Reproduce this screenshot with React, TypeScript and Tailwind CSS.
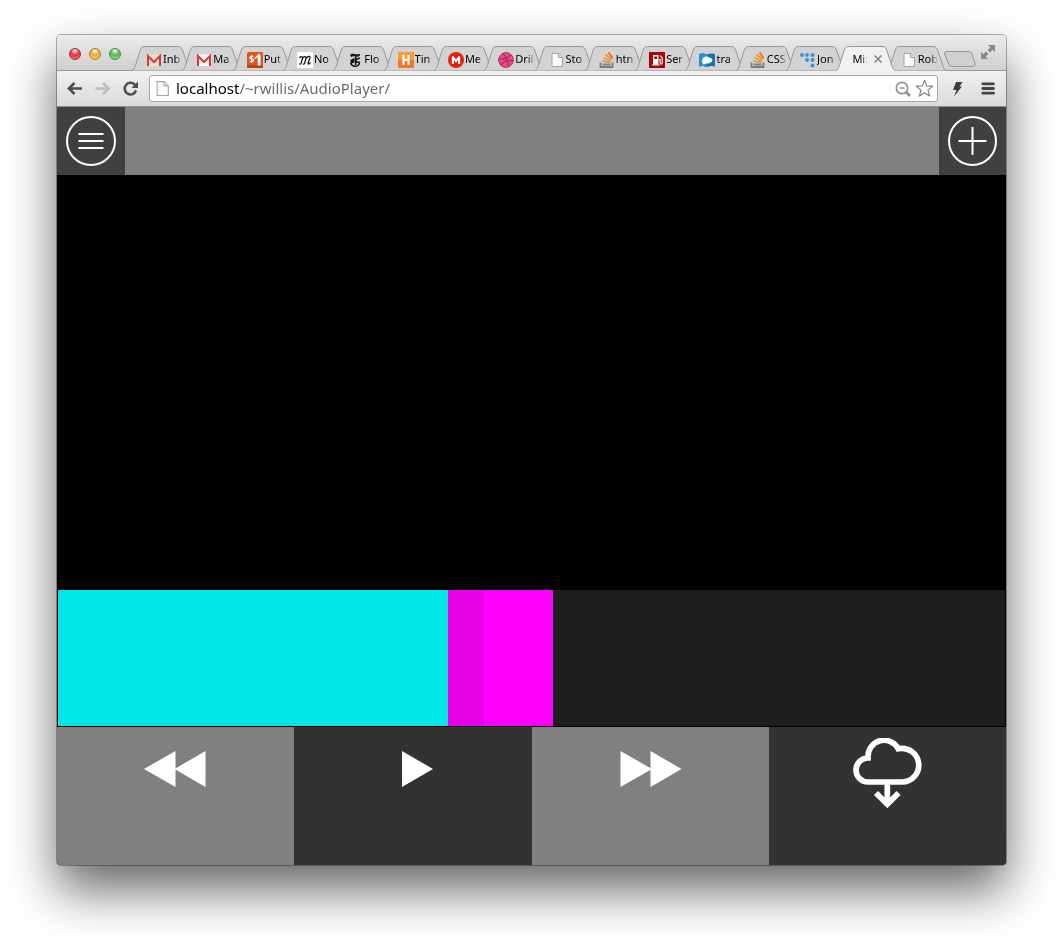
import { useState } from "react";
import type { ReactNode } from "react";

const ICON = "h-4 w-4 shrink-0";

function Gmail({ tint }: { tint: string }) {
  return (
    <svg viewBox="0 0 16 16" className={ICON} aria-hidden="true">
      <rect x="1" y="2.5" width="14" height="11.5" rx="1" fill={tint} />
      <path d="M2 13.5 6.5 8.5M14 13.5 9.5 8.5" stroke="#cfc8bf" strokeWidth="0.8" />
      <path d="M2 14V4l6 6 6-6v10" fill="none" stroke="#d93a34" strokeWidth="2" />
    </svg>
  );
}

function PageIcon({ className = ICON }: { className?: string }) {
  return (
    <svg viewBox="0 0 16 16" className={className} aria-hidden="true">
      <path d="M3 1.500h6.500L13.500 5.500v9H3z" fill="#fafafa" stroke="#a4a4a4" />
      <path d="M9.500 1.500v4h4" fill="#e4e4e4" stroke="#a4a4a4" />
    </svg>
  );
}

function Dollar() {
  return (
    <svg viewBox="0 0 16 16" className={ICON} aria-hidden="true">
      <rect width="16" height="16" rx="1.500" fill="#d9581c" />
      <rect y="13" width="16" height="3" rx="1" fill="#b8440f" />
      <path d="M6.500 4.500H3.500L2.700 6l1 1h2.200l.8 1-.8 1.500H2.500M4.700 3v8" fill="none" stroke="#fff" strokeWidth="1.100" />
      <path d="M8 6.500 11.500 3v10.500M12.800 2.500v11" fill="none" stroke="#fff" strokeWidth="1.500" />
    </svg>
  );
}

function Script() {
  return (
    <svg viewBox="0 0 16 16" className={ICON} aria-hidden="true">
      <rect width="16" height="16" fill="#fff" />
      <path d="M2.500 6C3 4 6 4 5.500 6.500L4 11.500c-.5 1-1.500.5-1.500 0M5.500 6.500C7 4 9.500 4 9 6.500L7.500 11.500c-.5 1-1.500.5-1.500 0M9 6.500C10.500 4 13.500 3.500 13 5.500L11 11.500c.5 1 1.500.5 2.500-1" fill="none" stroke="#111" strokeWidth="1.200" />
    </svg>
  );
}

function Gothic() {
  return (
    <svg viewBox="0 0 16 16" className={ICON} aria-hidden="true">
      <path d="M4 2.200c2.500-1.200 5 1.300 9-.4.300 1.800-1 3-2.700 3C8 4.800 6 3.200 4.500 5 3.200 4.600 2.800 3 4 2.200z" fill="#111" />
      <path d="M8.700 4.500v8.500" stroke="#111" strokeWidth="1.600" />
      <path d="M3.500 7.800 7.500 6v4.500L3.500 12z" fill="#111" />
      <path d="M9 7.500 12.800 6M3.500 11c1 2.300 2.500 3.300 4.700 3.300 2.300 0 4-1.300 4.300-3.800L9 9.500" fill="none" stroke="#111" strokeWidth="1.500" />
    </svg>
  );
}

function LetterH() {
  return (
    <svg viewBox="0 0 16 16" className={ICON} aria-hidden="true">
      <rect width="16" height="16" rx="1" fill="#f4762a" />
      <rect width="16" height="8" rx="1" fill="#f99a3c" />
      <path d="M5.500 3v10M10.500 3v10M5.500 8h5" stroke="#fff" strokeWidth="2.100" />
    </svg>
  );
}

function LetterM() {
  return (
    <svg viewBox="0 0 16 16" className={ICON} aria-hidden="true">
      <circle cx="8" cy="8" r="8" fill="#e3210b" />
      <path d="M3.800 12V4.200h1.900L8 7.500l2.300-3.300h1.900V12h-2.100V8L8 10.800 5.900 8v4z" fill="#fff" />
    </svg>
  );
}

function Ball() {
  return (
    <svg viewBox="0 0 16 16" className={ICON} aria-hidden="true">
      <circle cx="8" cy="8" r="7.400" fill="#ea4c89" stroke="#b52d66" />
      <path d="M5 1.500c3 3.500 5 8 5.800 13M1 7c5 .3 9.500-1 12-4.500M3 13.500C5 9.500 9.500 7.500 15 8.800" fill="none" stroke="#a82a60" strokeWidth="1.200" />
    </svg>
  );
}

function Stack() {
  return (
    <svg viewBox="0 0 16 16" className={ICON} aria-hidden="true">
      <path d="M1.500 10.500V15h12v-4.500" fill="none" stroke="#7b7b7b" strokeWidth="1.800" />
      <path d="M3.500 12.500h8" stroke="#8a8069" strokeWidth="1.800" />
      <path d="m3.500 9 8.200 1.500" stroke="#c59a4f" strokeWidth="1.700" />
      <path d="m4.500 5.500 7.500 3.700" stroke="#ec9a24" strokeWidth="1.700" />
      <path d="m6.500 2.500 6.200 5" stroke="#f5901d" strokeWidth="1.700" />
      <path d="m9.500.3 4.200 6" stroke="#f0662c" strokeWidth="1.700" />
    </svg>
  );
}

function Fuel() {
  return (
    <svg viewBox="0 0 16 16" className={ICON} aria-hidden="true">
      <rect width="16" height="16" fill="#ab0505" />
      <path d="M4 3h5.500v10H4z" fill="#fff" />
      <path d="M5.200 4.500h3v2.500h-3z" fill="#ab0505" />
      <path d="M3 13h7.500M10 7.500h1.200V11c0 1.500 2 1.500 2 0V6l-2-2.500" fill="none" stroke="#fff" strokeWidth="1.100" />
    </svg>
  );
}

function BlueBook() {
  return (
    <svg viewBox="0 0 16 16" className={ICON} aria-hidden="true">
      <path d="M0 2c3-1 5-.5 8 .5 3-1 5-1.500 8-.5v12.500c-3-1-5-.5-8 .5-3-1-5-1.500-8-.5z" fill="#1273b5" />
      <path d="M0 2c3-1 5-.5 8 .5V15c-3-1-5-1.500-8-.5z" fill="#2493d3" />
      <path d="M4.500 12.500c-2-2-2-6.500 1-7.500 2-1 4 0 5.500 1 2 0 3 2 2 3.500s-2.500.8-3 2H7z" fill="#fff" />
    </svg>
  );
}

const DOTS = [
  [2, 3],
  [7, 3],
  [12.5, 3],
  [7, 8],
  [12.5, 8],
  [12.5, 13.5],
];

function Dots() {
  return (
    <svg viewBox="0 0 16 16" className={ICON} aria-hidden="true">
      {DOTS.map(([x, y], i) => (
        <circle key={i} cx={x} cy={y} r="2" fill="#3f92d2" />
      ))}
    </svg>
  );
}

type TabData = { label: string; icon?: ReactNode };

const tabs: TabData[] = [
  { label: "Inb", icon: <Gmail tint="#e9e2d6" /> },
  { label: "Ma", icon: <Gmail tint="#ffffff" /> },
  { label: "Put", icon: <Dollar /> },
  { label: "No", icon: <Script /> },
  { label: "Flo", icon: <Gothic /> },
  { label: "Tin", icon: <LetterH /> },
  { label: "Me", icon: <LetterM /> },
  { label: "Dril", icon: <Ball /> },
  { label: "Sto", icon: <PageIcon /> },
  { label: "htn", icon: <Stack /> },
  { label: "Ser", icon: <Fuel /> },
  { label: "tra", icon: <BlueBook /> },
  { label: "CSS", icon: <Stack /> },
  { label: "Jon", icon: <Dots /> },
  { label: "Mi:" },
  { label: "Rob", icon: <PageIcon /> },
];

function Tab({ tab, active, onSelect }: { tab: TabData; active: boolean; onSelect: () => void }) {
  return (
    <div className={`relative h-[25px] min-w-0 flex-1 ${active ? "z-10" : ""}`}>
      <svg
        viewBox="0 0 60 25"
        preserveAspectRatio="none"
        className="absolute inset-y-0 left-0 h-full w-[calc(100%+9px)]"
        aria-hidden="true"
      >
        <path
          d="M0 24.500C2 24 2.500 22 3.500 19.500L8 5C9 2 10 .5 13 .5H46.500C49.500 .5 50.500 2 51.500 5L56.500 19.500C57.500 22 58 24 60 24.500"
          fill={active ? "#f1f1f1" : "#d3d3d3"}
          stroke="#979797"
        />
        {active && <path d="M1 25h58" stroke="#f1f1f1" strokeWidth="2" />}
      </svg>
      <button
        type="button"
        role="tab"
        aria-selected={active}
        onClick={onSelect}
        className={`relative flex h-full w-full items-center gap-px pt-0.5 ${tab.icon ? "pl-3.5" : "pl-4"}`}
      >
        {tab.icon}
        <span
          className={`text-left text-[11px] whitespace-nowrap text-black mask-r-from-60% ${
            tab.icon ? "min-w-5" : "min-w-4"
          }`}
        >
          {tab.label}
        </span>
      </button>
      {active && (
        <button type="button" aria-label="Close tab" className="absolute top-2 right-1 h-2.5 w-2.5">
          <svg viewBox="0 0 10 10" aria-hidden="true">
            <path d="m1.500 1.500 7 7m0-7-7 7" stroke="#858585" strokeWidth="1.700" />
          </svg>
        </button>
      )}
    </div>
  );
}

function TabStrip() {
  const [current, setCurrent] = useState(14);
  return (
    <div className="flex h-9 items-end border-b border-[#979797] bg-linear-to-b from-[#ececec] to-[#cfcfcf]">
      <div className="flex w-[75px] shrink-0 gap-2 self-center pt-0.5 pl-3">
        <button type="button" aria-label="Close window" className="h-3 w-3 rounded-full border border-[#a13333] bg-[radial-gradient(circle_at_50%_20%,#ffd8d8_5%,#e4303a_45%,#ff7b7b)]" />
        <button type="button" aria-label="Minimise window" className="h-3 w-3 rounded-full border border-[#a8772a] bg-[radial-gradient(circle_at_50%_20%,#fff3d5_5%,#eda62b_45%,#ffe06b)]" />
        <button type="button" aria-label="Zoom window" className="h-3 w-3 rounded-full border border-[#4c8a45] bg-[radial-gradient(circle_at_50%_20%,#e8ffe3_5%,#55b64d_45%,#a8ec8d)]" />
      </div>
      <div role="tablist" className="-mb-px flex min-w-0 flex-1">
        {tabs.map((tab, i) => (
          <Tab key={i} tab={tab} active={i === current} onSelect={() => setCurrent(i)} />
        ))}
      </div>
      <button type="button" aria-label="New tab" className="mb-[3px] ml-1.5 h-4 w-[33px] shrink-0">
        <svg viewBox="0 0 33 16" className="h-4 w-full" aria-hidden="true">
          <path d="M4 .5h22q2 0 3 2l3 10q1 3-2 3H9q-2 0-3-2L1.500 3Q1 .5 4 .5z" fill="#d0d0d0" stroke="#979797" />
        </svg>
      </button>
      <button type="button" aria-label="Full screen" className="mr-2.5 mb-2.5 ml-1 h-4 w-4 shrink-0">
        <svg viewBox="0 0 16 16" className="h-4 w-4" aria-hidden="true">
          <path d="M8 1h7v7l-2.300-2.300-2.700 2.700-2.400-2.400 2.700-2.700zM1 8l2.300 2.300L6 7.600 8.400 10l-2.700 2.700L8 15H1z" fill="#8a8a8a" />
        </svg>
      </button>
    </div>
  );
}

function Toolbar() {
  const [address, setAddress] = useState("localhost/~rwillis/AudioPlayer/");
  return (
    <div className="flex h-9 items-center border-b border-[#8c8c8c] bg-linear-to-b from-[#f1f1f1] to-[#dadada] pl-2.5">
      <div className="flex w-[82px] shrink-0 gap-3">
        <button type="button" aria-label="Back" className="h-4 w-4">
          <svg viewBox="0 0 16 16" aria-hidden="true">
            <path d="M7.500 2 1.800 7.500 7.500 13M2 7.500h13" fill="none" stroke="#4d4d4d" strokeWidth="2.600" />
          </svg>
        </button>
        <button type="button" aria-label="Forward" className="h-4 w-4">
          <svg viewBox="0 0 16 16" aria-hidden="true">
            <path d="M8 2l5.700 5.500L8 13M13.500 7.500H.5" fill="none" stroke="#bcbcbc" strokeWidth="2.600" />
          </svg>
        </button>
        <button type="button" aria-label="Reload" className="h-4 w-4">
          <svg viewBox="0 0 16 16" aria-hidden="true">
            <path d="M12.200 4.200A5.800 5.800 0 1 0 13 9.500" fill="none" stroke="#4d4d4d" strokeWidth="2.500" />
            <path d="M15 .5v6.400H8.500z" fill="#4d4d4d" />
          </svg>
        </button>
      </div>
      <div className="flex h-[27px] min-w-0 flex-1 items-center rounded-[3px] border border-[#a5a5a5] bg-white pr-[3px] pl-1">
        <PageIcon className="h-[17px] w-[17px] shrink-0" />
        <input
          aria-label="Address"
          value={address}
          spellCheck={false}
          onChange={(e) => setAddress(e.target.value)}
          className="ml-[5px] min-w-0 flex-1 bg-[linear-gradient(90deg,#000_64px,#666_64px)] bg-clip-text text-[15px] text-transparent caret-black outline-none"
        />
        <button type="button" aria-label="Zoom" className="h-4 w-4 shrink-0">
          <svg viewBox="0 0 16 16" aria-hidden="true">
            <circle cx="7" cy="7" r="5.700" fill="none" stroke="#929292" strokeWidth="1.700" />
            <path d="M4.500 7h5" stroke="#929292" strokeWidth="1.500" />
            <path d="m11 11 4 4" stroke="#929292" strokeWidth="2.600" />
          </svg>
        </button>
        <button type="button" aria-label="Bookmark" className="ml-1 h-[19px] w-[19px] shrink-0">
          <svg viewBox="0 0 19 19" aria-hidden="true">
            <path d="m9.500 1.200 2.200 5.700 6 .3-4.700 3.900 1.700 6-5.200-3.400-5.200 3.400 1.700-6L1.300 7.200l6-.3z" fill="none" stroke="#858585" strokeWidth="1.200" strokeLinejoin="round" />
          </svg>
        </button>
      </div>
      <button type="button" aria-label="Extension" className="ml-3 h-4 w-4 shrink-0">
        <svg viewBox="0 0 16 16" aria-hidden="true">
          <path d="M6 1h6.500L9.500 5.500H12L4 15.500l2.500-6.500H3z" fill="#3d3d3d" />
        </svg>
      </button>
      <button type="button" aria-label="Menu" className="mr-2.5 ml-3.5 h-4 w-4 shrink-0">
        <svg viewBox="0 0 16 16" aria-hidden="true">
          <path d="M2.800 2.800h10.700M2.800 7.500h10.700M2.800 12.200h10.700" stroke="#454545" strokeWidth="2.800" strokeLinecap="round" />
        </svg>
      </button>
    </div>
  );
}

function Player() {
  return (
    <main className="flex flex-1 flex-col bg-black">
      <header className="flex h-[68px] justify-between bg-[#808080]">
        <button type="button" aria-label="Playlist" className="grid w-[68px] place-items-center bg-[#404040]">
          <svg viewBox="0 0 50 50" className="h-[50px] w-[50px]" fill="none" stroke="#fff" strokeWidth="2" aria-hidden="true">
            <circle cx="25" cy="25" r="24" />
            <path d="M12.500 18h25M12.500 25h25M12.500 32h25" />
          </svg>
        </button>
        <button type="button" aria-label="Add" className="grid w-[67px] place-items-center bg-[#404040]">
          <svg viewBox="0 0 49 50" className="h-[50px] w-[49px]" fill="none" stroke="#fff" strokeWidth="2" aria-hidden="true">
            <ellipse cx="24.500" cy="25" rx="23.500" ry="24" />
            <path d="M10.500 25h28M24.500 11v28" />
          </svg>
        </button>
      </header>
      <div className="flex-1" />
      <div className="flex h-[138px] border border-black bg-[#1e1e1e]">
        <div className="w-[41.2%] bg-[#00e6e6]" />
        <div className="w-[3.8%] bg-[#e600e6]" />
        <div className="w-[7.3%] bg-[#ff00ff]" />
      </div>
      <div className="grid h-[138px] grid-cols-4">
        <button type="button" aria-label="Rewind" className="flex justify-center bg-[#808080] pt-6">
          <svg viewBox="0 0 64 36" className="h-9 w-16" fill="#fff" aria-hidden="true">
            <path d="M0 18 31.500 0v36zM30.500 18 61.500 0v36z" />
          </svg>
        </button>
        <button type="button" aria-label="Play" className="flex justify-center bg-[#323232] pt-6">
          <svg viewBox="0 0 40 36" className="h-9 w-10" fill="#fff" aria-hidden="true">
            <path d="M9 0v36l31-18z" />
          </svg>
        </button>
        <button type="button" aria-label="Fast forward" className="flex justify-center bg-[#808080] pt-6">
          <svg viewBox="0 0 64 36" className="h-9 w-16" fill="#fff" aria-hidden="true">
            <path d="M2.500 0v36L34 18zM32.500 0v36l31-18z" />
          </svg>
        </button>
        <button type="button" aria-label="Download" className="flex justify-center bg-[#323232] pt-[11px]">
          <svg viewBox="0 0 71 71" className="h-[71px] w-[71px]" fill="none" stroke="#fff" strokeWidth="5.700" aria-hidden="true">
            <path d="M50 44H16a12 12 0 0 1 0-24V19A16.100 16.100 0 0 1 46.300 10.800A16.800 16.800 0 1 1 50 44z" />
            <path d="M35.300 44v20M24 55l11.300 11.300L46.600 55" />
          </svg>
        </button>
      </div>
    </main>
  );
}

export default function App() {
  return (
    <div className="flex min-h-screen flex-col bg-white px-[57px] pt-[35px] pb-[79px] font-['Noto_Sans','Open_Sans',sans-serif]">
      <div className="flex flex-1 flex-col overflow-hidden rounded-[4px] shadow-[0_0_0_1px_rgba(0,0,0,0.3),0_25px_50px_rgba(0,0,0,0.6)]">
        <TabStrip />
        <Toolbar />
        <Player />
      </div>
    </div>
  );
}
